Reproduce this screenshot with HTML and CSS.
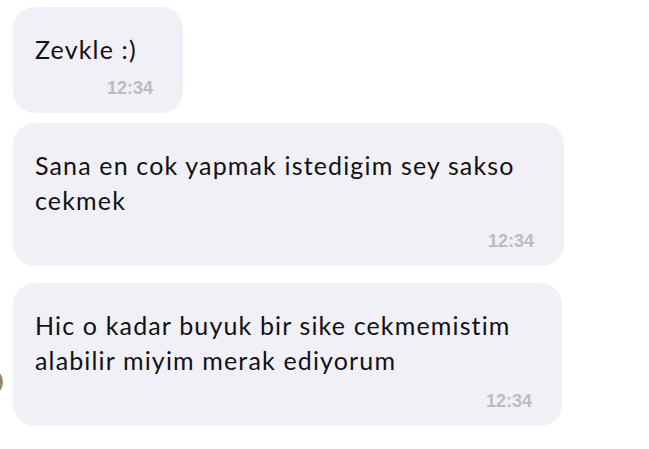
FILE: index.html
```html
<!DOCTYPE html>
<html lang="tr">
<head>
<meta charset="utf-8">
<link rel="stylesheet" href="styles.css">
</head>
<body>
<div class="chat">
  <div class="msg msg--short">
    <p class="text">Zevkle :)</p>
    <span class="time">12:34</span>
  </div>
  <div class="msg msg--long">
    <p class="text">Sana en cok yapmak istedigim sey sakso cekmek</p>
    <span class="time">12:34</span>
  </div>
  <div class="row">
    <div class="avatar"></div>
    <div class="msg msg--long msg--last">
      <p class="text">Hic o kadar buyuk bir sike cekmemistim alabilir miyim merak ediyorum</p>
      <span class="time">12:34</span>
    </div>
  </div>
</div>
</body>
</html>
```

FILE: styles.css
```css
html, body {
  margin: 0;
  padding: 0;
  background: #ffffff;
}
body {
  width: 649px;
  height: 449px;
  overflow: hidden;
  font-family: "Lato", "Noto Sans", sans-serif;
  color: #111114;
}
.chat {
  display: flex;
  flex-direction: column;
  align-items: flex-start;
  padding: 7px 0 0 13px;
}
.msg {
  box-sizing: border-box;
  background: #f1f0f6;
  border-radius: 22px;
  padding: 25px 30px 15px 22px;
  display: flex;
  flex-direction: column;
}
.msg--short {
  width: 170px;
  height: 106px;
}
.msg--long {
  width: 551px;
  height: 143px;
  margin-top: 10px;
}
.msg--last {
  width: 549px;
  margin-top: 0;
}
.row {
  display: flex;
  align-items: flex-end;
  margin-top: 17px;
  margin-left: -13px;
}
.avatar {
  width: 28px;
  height: 28px;
  border-radius: 50%;
  background: #9a8768;
  margin-left: -25px;
  margin-right: 10px;
  margin-bottom: 30px;
  flex: none;
}
.text {
  margin: 0;
  font-size: 25px;
  line-height: 35px;
  letter-spacing: 1.15px;
  font-variant-ligatures: none;
  padding-right: 10px;
}
.time {
  margin-top: auto;
  align-self: flex-end;
  font-family: "Liberation Sans", Arial, sans-serif;
  font-weight: bold;
  font-size: 18px;
  line-height: 20px;
  color: #bcbcc0;
}
```
